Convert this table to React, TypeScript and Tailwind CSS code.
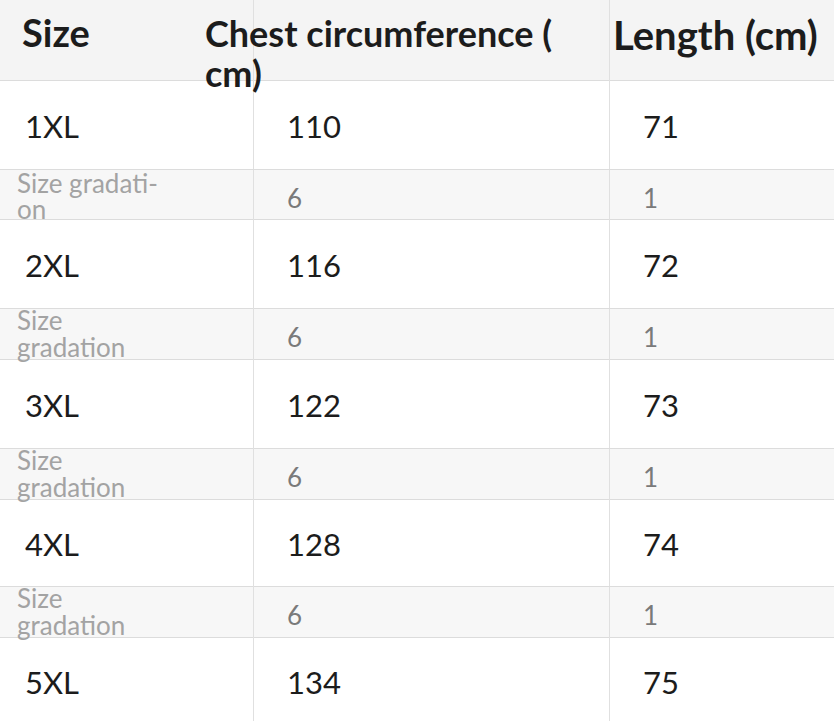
import React from "react";

type Row = { size: string; chest: string; length: string; grad?: boolean; h: string };

const rows: Row[] = [
  { size: "1XL", chest: "110", length: "71", h: "h-[89px]" },
  { size: "Size gradati-\non", chest: "6", length: "1", grad: true, h: "h-[50px]" },
  { size: "2XL", chest: "116", length: "72", h: "h-[89px]" },
  { size: "Size\ngradation", chest: "6", length: "1", grad: true, h: "h-[51px]" },
  { size: "3XL", chest: "122", length: "73", h: "h-[89px]" },
  { size: "Size\ngradation", chest: "6", length: "1", grad: true, h: "h-[51px]" },
  { size: "4XL", chest: "128", length: "74", h: "h-[87px]" },
  { size: "Size\ngradation", chest: "6", length: "1", grad: true, h: "h-[51px]" },
  { size: "5XL", chest: "134", length: "75", h: "h-[86px]" },
];

const App = () => {
  return (
    <div
      className="w-[834px] h-[721px] overflow-hidden bg-white text-[#1c1c1c]"
      style={{ fontFamily: "Lato, 'Open Sans', sans-serif" }}
    >
      <div className="grid grid-cols-[254px_356px_224px] h-[81px] bg-[#f4f4f4] border-b border-[#dcdcdc]">
        <div className="border-r border-[#e0e0e0] pl-[22px] pt-[12px] text-[38px] font-bold leading-[40px]">
          Size
        </div>
        <div className="relative border-r border-[#e0e0e0] pt-[13px] text-[36px] font-bold leading-[40px] -ml-[49px] whitespace-pre">
          {"Chest circumference (\ncm)"}
        </div>
        <div className="pl-[3px] pt-[15px] text-[40px] font-bold leading-[40px] whitespace-nowrap">
          Length (cm)
        </div>
      </div>
      {rows.map((r, i) => (
        <div
          key={i}
          className={`grid grid-cols-[254px_356px_224px] border-b border-[#dcdcdc] ${r.h} ${
            r.grad ? "bg-[#f7f7f7] text-[#a3a3a3]" : "bg-white"
          }`}
        >
          {r.grad ? (
            <div
              className={`border-r border-[#e0e0e0] pl-[17px] text-[26px] whitespace-pre ${
                i === 1 ? "leading-[26px]" : "leading-[27px] -mt-[2px]"
              }`}
            >
              {r.size}
            </div>
          ) : (
            <div className="border-r border-[#e0e0e0] pl-[25px] flex items-center pt-[3px] text-[31px]">
              {r.size}
            </div>
          )}
          <div
            className={`border-r border-[#e0e0e0] pl-[33px] flex items-center ${
              r.grad ? "pt-[4px] text-[26px] text-[#7a7a7a]" : "pt-[3px] text-[31px]"
            }`}
          >
            {r.chest}
          </div>
          <div
            className={`pl-[33px] flex items-center ${
              r.grad ? "pt-[4px] text-[26px] text-[#7a7a7a]" : "pt-[3px] text-[31px]"
            }`}
          >
            {r.length}
          </div>
        </div>
      ))}
    </div>
  );
};

export default App;
